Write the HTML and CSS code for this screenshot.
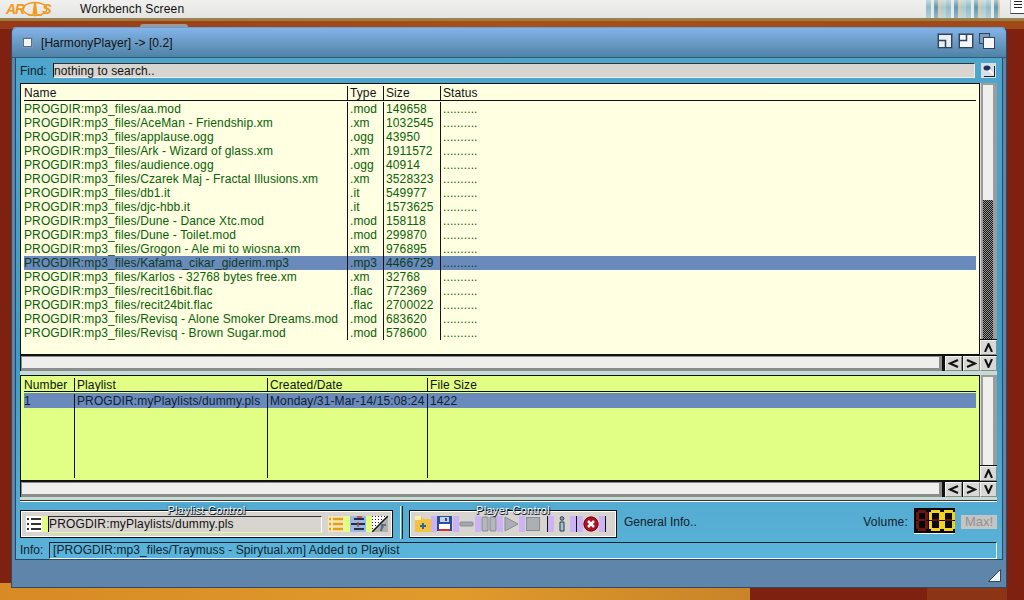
FILE: index.html
```html
<!DOCTYPE html>
<html lang="en">
<head>
<meta charset="utf-8">
<title>HarmonyPlayer</title>
<link rel="stylesheet" href="styles.css">
</head>
<body>
<div class="desktop">
  <header class="menubar">
    <div class="logo"><span>AR</span><svg width="26" height="16" viewBox="0 0 26 16"><ellipse cx="13" cy="8" rx="12" ry="6.500" fill="none" stroke="#f09a20" stroke-width="1.300"/><path d="M12 2h2l1.500 11h-5z" fill="#f09a20"/><path d="M6 14h14" stroke="#f09a20" stroke-width="1.500"/></svg><span>S</span></div>
    <span class="screen-title">Workbench Screen</span>
    <div class="backdrop-thumb"></div>
    <div class="depth-gadget"><i></i><i></i><i></i></div>
  </header>
  <div class="drive-bump"></div>

  <section class="window">
    <div class="titlebar">
      <span class="close-gadget"></span>
      <span class="title-text">[HarmonyPlayer] -&gt; [0.2]</span>
      <div class="title-gadgets">
        <svg width="16" height="16" viewBox="0 0 16 16"><rect width="16" height="16" fill="#5c7898"/><rect x="1.500" y="1.500" width="13" height="13" fill="#e8eef2" stroke="#2c4560"/><path d="M1.500 7.500h7v7" fill="none" stroke="#2c4560" stroke-width="1.500"/></svg>
        <svg width="16" height="16" viewBox="0 0 16 16"><rect width="16" height="16" fill="#5c7898"/><rect x="1.500" y="1.500" width="13" height="13" fill="#f4f6f8" stroke="#2c4560"/><path d="M8.500 1.500v6h-7" fill="none" stroke="#2c4560" stroke-width="1.500"/></svg>
        <svg width="16" height="16" viewBox="0 0 16 16"><rect x=".5" y=".5" width="10" height="10" fill="#7f9cbc" stroke="#2c4560"/><rect x="4.500" y="4.500" width="11" height="11" fill="#f4f6f8" stroke="#2c4560"/></svg>
      </div>
    </div>

    <div class="body">
      <div class="find-row">
        <label class="lbl">Find:</label>
        <div class="input find-input">nothing to search..</div>
        <button class="search-btn" aria-label="search"><svg width="15" height="15" viewBox="0 0 15 15"><rect width="15" height="15" fill="#d8e0e4"/><path d="M13 3h1v11H3v-1h10z" fill="#223"/><ellipse cx="6" cy="5" rx="3.500" ry="2.500" fill="#24305c"/><path d="M8 7l4 4" stroke="#fff" stroke-width="2"/></svg></button>
      </div>

      <div class="panel panel-files">
        <div class="panel-main">
          <div class="list list-files">
            <div class="row head"><span>Name</span><span>Type</span><span>Size</span><span>Status</span></div>
            <div class="row"><span>PROGDIR:mp3_files/aa.mod</span><span>.mod</span><span>149658</span><span>..........</span></div>
            <div class="row"><span>PROGDIR:mp3_files/AceMan - Friendship.xm</span><span>.xm</span><span>1032545</span><span>..........</span></div>
            <div class="row"><span>PROGDIR:mp3_files/applause.ogg</span><span>.ogg</span><span>43950</span><span>..........</span></div>
            <div class="row"><span>PROGDIR:mp3_files/Ark - Wizard of glass.xm</span><span>.xm</span><span>1911572</span><span>..........</span></div>
            <div class="row"><span>PROGDIR:mp3_files/audience.ogg</span><span>.ogg</span><span>40914</span><span>..........</span></div>
            <div class="row"><span>PROGDIR:mp3_files/Czarek Maj - Fractal Illusions.xm</span><span>.xm</span><span>3528323</span><span>..........</span></div>
            <div class="row"><span>PROGDIR:mp3_files/db1.it</span><span>.it</span><span>549977</span><span>..........</span></div>
            <div class="row"><span>PROGDIR:mp3_files/djc-hbb.it</span><span>.it</span><span>1573625</span><span>..........</span></div>
            <div class="row"><span>PROGDIR:mp3_files/Dune - Dance Xtc.mod</span><span>.mod</span><span>158118</span><span>..........</span></div>
            <div class="row"><span>PROGDIR:mp3_files/Dune - Toilet.mod</span><span>.mod</span><span>299870</span><span>..........</span></div>
            <div class="row"><span>PROGDIR:mp3_files/Grogon - Ale mi to wiosna.xm</span><span>.xm</span><span>976895</span><span>..........</span></div>
            <div class="row selected"><span>PROGDIR:mp3_files/Kafama_cikar_giderim.mp3</span><span>.mp3</span><span>4466729</span><span>..........</span></div>
            <div class="row"><span>PROGDIR:mp3_files/Karlos - 32768 bytes free.xm</span><span>.xm</span><span>32768</span><span>..........</span></div>
            <div class="row"><span>PROGDIR:mp3_files/recit16bit.flac</span><span>.flac</span><span>772369</span><span>..........</span></div>
            <div class="row"><span>PROGDIR:mp3_files/recit24bit.flac</span><span>.flac</span><span>2700022</span><span>..........</span></div>
            <div class="row"><span>PROGDIR:mp3_files/Revisq - Alone Smoker Dreams.mod</span><span>.mod</span><span>683620</span><span>..........</span></div>
            <div class="row"><span>PROGDIR:mp3_files/Revisq - Brown Sugar.mod</span><span>.mod</span><span>578600</span><span>..........</span></div>
          </div>
          <div class="hscroll">
            <div class="track"></div>
            <button class="arrow" aria-label="left"><svg width="11" height="9" viewBox="0 0 11 9"><path d="M10 1L2 4.500 10 8" fill="none" stroke="#111" stroke-width="2"/></svg></button>
            <button class="arrow" aria-label="right"><svg width="11" height="9" viewBox="0 0 11 9"><path d="M1 1l8 3.500L1 8" fill="none" stroke="#111" stroke-width="2"/></svg></button>
          </div>
        </div>
        <div class="vscroll">
          <div class="vtrack"><div class="vfill dither"><div class="thumb thumb-files"></div></div></div>
          <button class="arrow" aria-label="up"><svg width="9" height="9" viewBox="0 0 9 9"><path d="M1 9L4.500 1 8 9" fill="none" stroke="#111" stroke-width="2"/></svg></button>
          <button class="arrow" aria-label="down"><svg width="9" height="9" viewBox="0 0 9 9"><path d="M1 0l3.500 8L8 0" fill="none" stroke="#111" stroke-width="2"/></svg></button>
        </div>
      </div>

      <div class="panel panel-playlist">
        <div class="panel-main">
          <div class="list list-playlist">
            <div class="row head"><span>Number</span><span>Playlist</span><span>Created/Date</span><span>File Size</span></div>
            <div class="row selected"><span>1</span><span>PROGDIR:myPlaylists/dummy.pls</span><span>Monday/31-Mar-14/15:08:24</span><span>1422</span></div>
            <div class="row filler"><span></span><span></span><span></span><span></span></div>
          </div>
          <div class="hscroll">
            <div class="track"></div>
            <button class="arrow" aria-label="left"><svg width="11" height="9" viewBox="0 0 11 9"><path d="M10 1L2 4.500 10 8" fill="none" stroke="#111" stroke-width="2"/></svg></button>
            <button class="arrow" aria-label="right"><svg width="11" height="9" viewBox="0 0 11 9"><path d="M1 1l8 3.500L1 8" fill="none" stroke="#111" stroke-width="2"/></svg></button>
          </div>
        </div>
        <div class="vscroll">
          <div class="vtrack"><div class="vfill"><div class="thumb thumb-full"></div></div></div>
          <button class="arrow" aria-label="up"><svg width="9" height="9" viewBox="0 0 9 9"><path d="M1 9L4.500 1 8 9" fill="none" stroke="#111" stroke-width="2"/></svg></button>
          <button class="arrow" aria-label="down"><svg width="9" height="9" viewBox="0 0 9 9"><path d="M1 0l3.500 8L8 0" fill="none" stroke="#111" stroke-width="2"/></svg></button>
        </div>
      </div>

      <div class="controls">
        <div class="group group-playlist">
          <span class="legend"><b>Playlist Control</b></span>
          <span class="tool tool-white"><svg width="16" height="16" viewBox="0 0 16 16"><path d="M1 3h2M1 8h2M1 13h2M5 3h10M5 8h10M5 13h10" stroke="#333" stroke-width="2"/></svg></span>
          <span class="pad-green"></span>
          <div class="input pl-input">PROGDIR:myPlaylists/dummy.pls</div>
          <span class="tool tool-list"><svg width="16" height="16" viewBox="0 0 16 16"><path d="M1 3h2M1 8h2M1 13h2M5 3h10M5 8h10M5 13h10" stroke="#e0a018" stroke-width="2.500"/></svg></span>
          <span class="pad-green"></span>
          <span class="tool tool-blue"><svg width="16" height="16" viewBox="0 0 16 16"><path d="M4 3h10M1 8h14M4 13h10" stroke="#263040" stroke-width="2"/><path d="M7 1h5M8 6v5" stroke="#c04030" stroke-width="1.500"/></svg></span>
          <span class="pad-green"></span>
          <span class="tool tool-dots"><svg width="16" height="16" viewBox="0 0 16 16"><defs><pattern id="dots" width="3" height="3" patternUnits="userSpaceOnUse"><rect width="3" height="3" fill="#fff"/><rect width="1" height="1" fill="#222"/></pattern></defs><path d="M0 0h16L0 16z" fill="url(#dots)"/><path d="M16 0v16H0z" fill="#b4b0ac"/><path d="M0 16L16 0" stroke="#111" stroke-width="1.500"/><path d="M9 8h5v2h-2l-2 5h-2l1-5z" fill="#54708c"/></svg></span>
        </div>
        <div class="divider"></div>
        <div class="group group-player">
          <span class="legend"><b>Player Control</b></span>
          <span class="tool"><svg width="16" height="16" viewBox="0 0 16 16"><path d="M0 0h6l2 3h8v13H0z" fill="#f4c23c"/><path d="M0 0h6v4H0z" fill="#fdf0b0"/><path d="M8 7v6M5 10h6" stroke="#2468b0" stroke-width="2"/></svg></span>
          <span class="pad-purple"></span>
          <span class="tool"><svg width="16" height="16" viewBox="0 0 16 16"><rect width="15" height="15" fill="#2a4f9a"/><rect x="3" y="1" width="9" height="5" fill="#c8d0dc"/><rect x="8" y="2" width="2" height="3" fill="#2a4f9a"/><rect x="2" y="8" width="11" height="7" fill="#fff"/><rect x="2" y="13" width="11" height="2" fill="#d83030"/></svg></span>
          <span class="pad-purple"></span>
          <span class="tool dim"><svg width="16" height="16" viewBox="0 0 16 16"><rect x="1" y="6" width="13" height="4" rx="1" fill="#a4a8ac" stroke="#8a8e92"/></svg></span>
          <span class="pad-purple"></span>
          <span class="tool dim"><svg width="16" height="16" viewBox="0 0 16 16"><rect x="1" y="1" width="6" height="14" rx="1" fill="#b4b8bc" stroke="#84888c"/><rect x="9" y="1" width="6" height="14" rx="1" fill="#b4b8bc" stroke="#84888c"/></svg></span>
          <span class="pad-purple"></span>
          <span class="tool dim"><svg width="16" height="16" viewBox="0 0 16 16"><path d="M2 1l13 7-13 7z" fill="#acb0b4" stroke="#888c90"/></svg></span>
          <span class="pad-purple"></span>
          <span class="tool dim"><svg width="16" height="16" viewBox="0 0 16 16"><rect x="1.500" y="1.500" width="13" height="13" fill="#acb0b4" stroke="#888c90"/></svg></span>
          <span class="gap"></span>
          <span class="bar"></span>
          <span class="pad-purple"></span>
          <span class="tool"><svg width="16" height="16" viewBox="0 0 16 16"><circle cx="8" cy="2.500" r="1.800" fill="#8ca4bc" stroke="#26384c"/><path d="M6 6h4v9H6z" fill="#a8c0d4" stroke="#26384c"/></svg></span>
          <span class="pad-purple"></span>
          <span class="bar"></span>
          <span class="pad-purple"></span>
          <span class="tool"><svg width="16" height="16" viewBox="0 0 16 16"><circle cx="8" cy="8" r="7.500" fill="#b01020"/><circle cx="8" cy="8" r="7" fill="none" stroke="#701018"/><path d="M5 5l6 6M11 5l-6 6" stroke="#fff" stroke-width="2.500"/></svg></span>
          <span class="pad-purple"></span>
          <span class="bar"></span>
        </div>
        <span class="lbl general">General Info..</span>
        <span class="lbl volume">Volume:</span>
        <svg class="led" width="41" height="25" viewBox="0 0 41 25">
          <rect width="41" height="25" fill="#080808"/>
          <g fill="#6a1414"><rect x="4" y="2" width="8" height="3"/><rect x="2" y="4" width="3" height="8"/><rect x="11" y="4" width="3" height="8"/><rect x="4" y="11" width="8" height="2"/><rect x="2" y="13" width="3" height="8"/><rect x="11" y="13" width="3" height="8"/><rect x="4" y="20" width="8" height="3"/><rect x="18" y="11" width="8" height="2"/><rect x="31" y="11" width="8" height="2"/></g>
          <g fill="#f4d21c"><rect x="17" y="2" width="9" height="3"/><rect x="15" y="4" width="3" height="8"/><rect x="25" y="4" width="3" height="8"/><rect x="15" y="13" width="3" height="8"/><rect x="25" y="13" width="3" height="8"/><rect x="17" y="20" width="9" height="3"/><rect x="30" y="2" width="9" height="3"/><rect x="28" y="4" width="3" height="8"/><rect x="38" y="4" width="3" height="8"/><rect x="28" y="13" width="3" height="8"/><rect x="38" y="13" width="3" height="8"/><rect x="30" y="20" width="9" height="3"/></g>
        </svg>
        <button class="max-btn">Max!</button>
      </div>

      <div class="info-row">
        <label class="lbl">Info:</label>
        <div class="info-box">[PROGDIR:mp3_files/Traymuss - Spirytual.xm] Added to Playlist</div>
      </div>
    </div>

    <div class="statusbar">
      <svg width="13" height="13" viewBox="0 0 13 13"><path d="M12.500 .5V12.500H.5z" fill="#f4f6f8" stroke="#2c4560"/></svg>
    </div>
  </section>
</div>
</body>
</html>
```

FILE: styles.css
```css
* { box-sizing: border-box; }
html, body { margin: 0; padding: 0; }
body {
  width: 1024px;
  height: 600px;
  overflow: hidden;
  font-family: "Liberation Sans", Arial, sans-serif;
  font-size: 12px;
  color: #111;
}
button { font: inherit; padding: 0; margin: 0; border: 0; }

.desktop {
  position: relative;
  width: 1024px;
  height: 600px;
  background:
    linear-gradient(#a08030, #a08030) 0 19px / 100% 2px no-repeat,
    linear-gradient(90deg, #98381a, #a8501a 50%, #a0481a) 0 21px / 100% 8px no-repeat,
    linear-gradient(90deg, #d88a24, #e09a2c 60%, #c88428) 0 583px / 750px 17px no-repeat,
    linear-gradient(#8c3416, #8c3416) 927px 588px / 80px 12px no-repeat,
    #7e2110;
}

.menubar {
  display: flex;
  align-items: center;
  height: 19px;
  background: linear-gradient(#f0f0ee, #e4e4e2);
  border-bottom: 1px solid #8a8478;
  position: relative;
}
.logo {
  display: flex;
  align-items: center;
  margin-left: 6px;
  width: 74px;
  font-size: 14px;
  font-weight: bold;
  font-style: italic;
  letter-spacing: -1px;
  color: #f09a20;
  line-height: 16px;
}
.logo svg { margin: 0 -6px 0 -2px; }
.screen-title { font-size: 12px; letter-spacing: .15px; }
.backdrop-thumb {
  margin-left: auto;
  margin-right: 10px;
  width: 74px;
  height: 18px;
  background:
    linear-gradient(rgba(240,240,236,.55), rgba(240,240,236,0) 40%, rgba(240,240,236,.35)),
    repeating-linear-gradient(90deg, #8fbcc8 0 5px, #e4e8e4 5px 8px, #5f9ab4 8px 12px, #d8c4a4 12px 15px, #a8ccd4 15px 20px),
    #cfe0e4;
}
.depth-gadget {
  display: flex;
  flex-direction: column;
  gap: 2px;
  width: 14px;
  height: 14px;
  padding: 1px 0 0 3px;
  background: #fff;
  border-bottom: 1px solid #444;
  border-left: 1px solid #aaa;
  align-self: flex-start;
}
.depth-gadget i { display: block; width: 8px; height: 1px; background: #222; }
.drive-bump {
  position: absolute;
  left: 140px;
  top: 24px;
  width: 48px;
  height: 4px;
  background: #9a9a98;
  border-radius: 3px 3px 0 0;
}

.window {
  position: absolute;
  left: 11px;
  top: 27px;
  width: 996px;
  height: 561px;
  display: flex;
  flex-direction: column;
  background: #5f86aa;
  border: 1px solid #2f4a62;
  border-top-color: #6f9cc8;
  border-radius: 5px 5px 0 0;
}
.titlebar {
  display: flex;
  align-items: center;
  height: 30px;
  flex: none;
  padding-left: 10px;
  background: linear-gradient(#82b4ea, #6fa0cc 40%, #4e82a6);
  border-bottom: 1px solid #2f5a78;
  border-radius: 5px 5px 0 0;
}
.close-gadget {
  width: 9px;
  height: 9px;
  margin-left: 1px;
  background: #f4f4f4;
  border: 1px solid #53708c;
  outline: 1px solid #7d98b2;
  margin-right: 9px;
}
.title-text { font-size: 12px; letter-spacing: .05px; }
.title-gadgets {
  margin-left: auto;
  margin-right: 11px;
  display: flex;
  gap: 5px;
  margin-top: -3px;
}
.title-gadgets svg { display: block; }

.body {
  flex: 1;
  margin: 0 3px 0 3px;
  padding: 5px 5px 0 4px;
  display: flex;
  flex-direction: column;
  background: linear-gradient(#4ea6cc, #3f9cc4 60%, #5cb2d8);
  border-left: 1px solid #244a66;
  border-right: 1px solid #244a66;
  border-bottom: 1px solid #244a66;
}
.lbl { color: #10202c; }
.find-row {
  display: flex;
  align-items: center;
  height: 15px;
  flex: none;
}
.find-row .lbl { width: 33px; }
.input {
  background: #d8d4d0;
  color: #111;
  line-height: 14px;
  border-left: 1px solid #111;
  border-top: 1px solid #333;
  padding-left: 0;
  letter-spacing: .1px;
}
.find-input { width: 922px; height: 15px; border-right: 1px solid #eee; border-bottom: 1px solid #eee; }
.search-btn { width: 15px; height: 15px; margin-left: 6px; background: none; }
.search-btn svg { display: block; }

.panel {
  display: flex;
  flex: none;
  background: #111;
}
.panel-files { height: 292px; margin-top: 5px; border-bottom: 4px solid #c4dcd4; }
.panel-playlist { height: 122px; box-shadow: 0 3px 0 #c4dcd4, 0 4px 0 #333, 0 5px 0 #fff; }
.panel-main {
  flex: 1;
  min-width: 0;
  display: flex;
  flex-direction: column;
}
.list {
  flex: 1;
  min-height: 0;
  display: flex;
  flex-direction: column;
  margin: 1px 1px 0 1px;
  padding: 1px 3px 0 3px;
  line-height: 14px;
  letter-spacing: .12px;
}
.list-files { background: #ffffe2; color: #086008; }
.list-playlist { background: #e0ff84; color: #111; padding-bottom: 2px; }
.row {
  display: grid;
  height: 14px;
  flex: none;
  white-space: nowrap;
}
.row span { padding-left: 2px; border-right: 1px solid #111; overflow: hidden; }
.row span:first-child { padding-left: 0; }
.row span:last-child { border-right: 0; }
.list-files .row { grid-template-columns: 324px 36px 57px 1fr; }
.list-playlist .row { grid-template-columns: 51px 193px 160px 1fr; }
.row.head { color: #111; height: 16px; padding-top: 1px; box-shadow: inset 0 -1px 0 #111; letter-spacing: .1px; }
.list-files .row.head { margin-bottom: 1px; }
.list-playlist .row.head { height: 15px; margin-bottom: 1px; }
.row.selected { background: #6a8abc; color: #102030; }
.list-files .row.selected { color: #0c3c1c; }
.list-playlist .row.selected { height: 15px; padding-top: 1px; }
.row.filler { flex: 1; }

.hscroll {
  flex: none;
  display: flex;
  height: 17px;
  padding-top: 2px;
  gap: 1px;
}
.track {
  flex: 1;
  margin: 0 2px 0 1px;
  background: #eeeeec;
  border-top: 1px solid #8c8c8a;
  border-left: 1px solid #8c8c8a;
  border-bottom: 3px solid #8c8c8a;
  border-right: 3px solid #8c8c8a;
}
.arrow {
  width: 17px;
  height: 15px;
  background: #d8d8d4;
  border-top: 1px solid #f2f2f0;
  border-left: 1px solid #f2f2f0;
  border-bottom: 1px solid #8c8c8a;
  border-right: 1px solid #8c8c8a;
  display: flex;
  align-items: center;
  justify-content: center;
}
.vscroll {
  flex: none;
  width: 17px;
  display: flex;
  flex-direction: column;
  gap: 1px;
}
.vtrack {
  flex: 1;
  min-height: 0;
  background: #9c9c9a;
  border-left: 1px solid #d8d8d4;
  padding: 2px 4px 0 2px;
}
.vfill { height: 100%; }
.dither { background: repeating-conic-gradient(#111 0 25%, #999 0 50%) 0 0 / 2px 2px; }
.thumb { background: #efefed; }
.thumb-files { height: 115px; }
.thumb-full { height: 100%; }

.controls {
  display: flex;
  align-items: center;
  flex: none;
  height: 36px;
  margin-top: 7px;
  position: relative;
}
.group {
  position: relative;
  display: flex;
  align-items: center;
  height: 28px;
  background: #d8d4d0;
  border: 1px solid #111;
  box-shadow: 0 0 0 1px #fff inset;
  padding: 3px 2px 3px 5px;
  margin-top: 3px;
}
.group-playlist { width: 373px; }
.group-player { width: 208px; }
.legend {
  position: absolute;
  top: -6px;
  left: 0;
  right: 0;
  text-align: center;
  font-size: 11px;
  line-height: 11px;
  color: #fff;
  text-shadow: 1px 1px 0 #0c2030, 0 1px 0 #0c2030;
  pointer-events: none;
}
.legend b {
  font-weight: normal;
  padding: 0 1px;
  background: linear-gradient(#4ea6cc 0 50%, transparent 50%);
  letter-spacing: .3px;
}
.tool {
  flex: none;
  width: 16px;
  height: 16px;
  display: block;
}
.tool svg { display: block; }
.tool-white { background: #fff; }
.tool-list { background: #f8e8b8; }
.tool-blue { background: #9cb8e8; }
.tool-dots { background: #d8d4d0; }
.pad-green { width: 6px; height: 16px; background: #e0ff84; flex: none; }
.pad-purple { width: 6px; height: 16px; background: #ccb4f4; flex: none; }
.gap { width: 6px; flex: none; }
.pl-input {
  width: 274px;
  height: 16px;
  flex: none;
  margin-right: 6px;
  box-shadow: 0 1px 0 #e0ff84;
  border-right: 1px solid #fff;
  letter-spacing: .17px;
}
.bar { width: 1px; height: 16px; background: #111; flex: none; }
.divider {
  width: 3px;
  height: 33px;
  margin: 0 6px 0 7px;
  border-left: 1px solid #f0f8fc;
  border-right: 1px solid #102030;
  background: #5aaed0;
}
.general { margin-left: 7px; }
.volume { margin-left: auto; margin-right: 6px; letter-spacing: .2px; }
.led { display: block; margin-top: -3px; box-shadow: 0 1px 0 #fff; flex: none; }
.max-btn {
  width: 36px;
  height: 14px;
  margin: 0 0 0 6px;
  background: #c4c4c2;
  color: #929290;
  font-size: 13px;
  line-height: 14px;
  text-align: center;
}

.info-row {
  display: flex;
  align-items: center;
  height: 18px;
  margin-top: 1px;
  flex: none;
}
.info-row .lbl { width: 29px; }
.info-box {
  width: 948px;
  height: 17px;
  line-height: 15px;
  padding-left: 3px;
  letter-spacing: .08px;
  color: #10202c;
  background: #5ab4da;
  border-left: 1px solid #123;
  border-top: 1px solid #123;
  border-right: 1px solid #f4fbff;
  border-bottom: 1px solid #f4fbff;
}
.statusbar {
  flex: 1;
  display: flex;
  justify-content: flex-end;
  align-items: flex-end;
  padding: 0 5px 5px 0;
  background: #5f86aa;
  min-height: 0;
}
.statusbar svg { display: block; }
```
